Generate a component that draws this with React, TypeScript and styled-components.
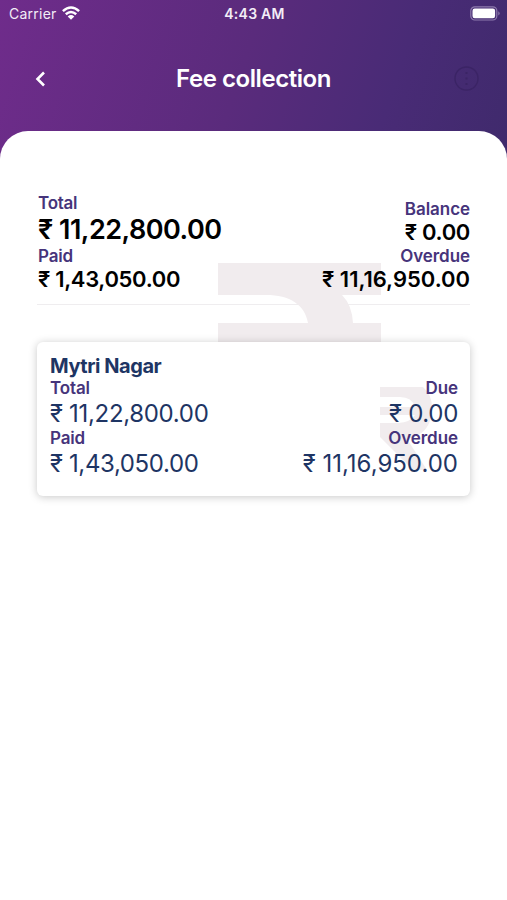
import React from "react";
import styled, { createGlobalStyle } from "styled-components";

const GlobalStyle = createGlobalStyle`
  * { box-sizing: border-box; }
  html, body { margin: 0; background: #fff; }
  body { font-family: Inter, "Liberation Sans", sans-serif; }
`;

const Screen = styled.main`
  width: 507px;
  height: 900px;
  overflow: hidden;
  display: flex;
  flex-direction: column;
  background: linear-gradient(108deg, #6f2c8b 0%, #5a2b7c 47%, #492b76 75%, #3f2a6c 100%) top / 100% 170px no-repeat;
`;

const StatusBar = styled.div`
  height: 27px;
  padding: 0 7px 0 9px;
  display: grid;
  grid-template-columns: 1fr auto 1fr;
  align-items: center;
  color: #f3edf7;
`;

const Carrier = styled.div`
  display: flex;
  align-items: center;
  gap: 5px;
  svg { display: block; margin-top: -2px; }
`;

const Battery = styled.div`
  justify-self: end;
  svg { display: block; }
`;

const Header = styled.header`
  height: 104px;
  padding: 0 27px 0 33px;
  display: grid;
  grid-template-columns: 27px 1fr 27px;
  align-items: center;
  color: #fff;
  svg { display: block; }
  h1 { justify-self: center; padding-right: 6px; }
`;

const IconButton = styled.button<{ $end?: boolean }>`
  border: 0;
  padding: 0 0 1px;
  background: none;
  color: inherit;
  justify-self: ${(p) => (p.$end ? "end" : "start")};
`;

const Sheet = styled.section`
  flex: 1;
  padding: 61px 37px 0;
  background: #fff;
  border-radius: 28px 28px 0 0;
`;

const Text = styled.span<{ $size: number; $line: number; $weight?: number; $color?: string; $track?: number }>`
  display: block;
  margin: 0;
  white-space: nowrap;
  font-size: ${(p) => p.$size}px;
  line-height: ${(p) => p.$line}px;
  font-weight: ${(p) => p.$weight ?? 400};
  color: ${(p) => p.$color ?? "inherit"};
  letter-spacing: ${(p) => p.$track ?? 0}px;
`;

const Summary = styled.div`
  position: relative;
  height: 113px;
  padding: 0 0 12px 1px;
  display: flex;
  justify-content: space-between;
  align-items: flex-end;
  border-bottom: 1px solid #efedef;
`;

const Column = styled.div<{ $end?: boolean }>`
  position: relative;
  display: flex;
  flex-direction: column;
  align-items: ${(p) => (p.$end ? "flex-end" : "flex-start")};
`;

const Watermark = styled.svg<{ $x: number; $y: number }>`
  position: absolute;
  left: ${(p) => p.$x}px;
  top: ${(p) => p.$y}px;
  fill: #f1ecee;
`;

const Card = styled.article`
  position: relative;
  margin-top: 37px;
  height: 154px;
  padding: 12px 12px 0 13px;
  background: #fff;
  border-radius: 6px;
  box-shadow: 0 1px 9px rgba(0, 0, 0, 0.22);
`;

const CardRow = styled.div`
  display: flex;
  justify-content: space-between;
`;

const Label = "#46347b";
const Navy = "#1e3564";

export default function App() {
  return (
    <>
      <GlobalStyle />
      <Screen>
        <StatusBar>
          <Carrier>
            <Text $size={14} $line={20} $track={0.25}>Carrier</Text>
            <svg width="18" height="14" viewBox="0 0 18 14" fill="none" stroke="#fff" strokeWidth="2.5">
              <path d="M.9 5.2Q9-2.2 17.1 5.2M3.8 8.3Q9 3.8 14.2 8.3" />
              <path d="M9 13.8L5.7 10.5Q9 7.6 12.3 10.5Z" fill="#fff" stroke="none" />
            </svg>
          </Carrier>
          <Text $size={14} $line={20} $weight={600} $track={0.25}>4:43 AM</Text>
          <Battery>
            <svg width="30" height="15" viewBox="0 0 30 15">
              <rect x=".8" y=".8" width="26" height="13.2" rx="4" fill="none" stroke="#8e7bad" strokeWidth="1.2" />
              <rect x="2.5" y="2.6" width="22.6" height="9.6" rx="2.2" fill="#fff" />
              <path d="M28.3 5.2Q31 7.4 28.3 9.6Z" fill="#8e7bad" />
            </svg>
          </Battery>
        </StatusBar>
        <Header>
          <IconButton aria-label="Back">
            <svg width="15" height="18" viewBox="0 0 15 18" fill="none" stroke="#fff" strokeWidth="2.6">
              <path d="M11 2.5L4.5 9L11 15.5" />
            </svg>
          </IconButton>
          <Text as="h1" $size={24} $line={30} $weight={600} $track={-0.45}>Fee collection</Text>
          <IconButton $end aria-label="More">
            <svg width="27" height="27" viewBox="0 0 27 27" fill="none" stroke="#3b2465" strokeWidth="1.4">
              <circle cx="13.5" cy="13.5" r="11.5" />
              <path d="M13.5 7v2M13.5 12.5v2M13.5 18v2" strokeWidth="2" />
            </svg>
          </IconButton>
        </Header>
        <Sheet>
          <Summary>
            <Watermark $x={181} $y={71} width="163" height="80" viewBox="0 0 163 80">
              <path d="M0 0H163V32H124Q134 42 135 60H163V80H0V60H90C87 42 72 32 48 32H0Z" />
            </Watermark>
            <Column>
              <Text $size={17} $line={21} $weight={600} $color={Label} $track={-0.25}>Total</Text>
              <Text $size={27} $line={32} $weight={600} $track={-0.5}>₹ 11,22,800.00</Text>
              <Text $size={17} $line={21} $weight={600} $color={Label} $track={-0.15}>Paid</Text>
              <Text $size={22} $line={25} $weight={600} $track={-0.34}>₹ 1,43,050.00</Text>
            </Column>
            <Column $end>
              <Text $size={17} $line={21} $weight={600} $color={Label} $track={-0.05}>Balance</Text>
              <Text $size={22} $line={25} $weight={600} $track={-0.34}>₹ 0.00</Text>
              <Text $size={17} $line={22} $weight={600} $color={Label} $track={-0.05}>Overdue</Text>
              <Text $size={22} $line={25} $weight={600} $track={-0.02}>₹ 11,16,950.00</Text>
            </Column>
          </Summary>
          <Card>
            <Watermark $x={343} $y={45} width="56" height="86" viewBox="0 0 56 86">
              <path fillRule="evenodd" d="M0 0H43Q52 8 52 20C52 39 43 49 27 52L47 83H33L0 50V36H18Q31 35 35 28H0V20H35Q32 10 20 10H0Z" />
            </Watermark>
            <Text as="h2" $size={20} $line={24} $weight={700} $color={Navy} $track={-0.45}>Mytri Nagar</Text>
            <CardRow>
              <Column>
                <Text $size={17} $line={20} $weight={600} $color={Label} $track={-0.15}>Total</Text>
                <Text $size={24} $line={31} $color={Navy} $track={-0.32}>₹ 11,22,800.00</Text>
                <Text $size={17} $line={19} $weight={600} $color={Label} $track={-0.15}>Paid</Text>
                <Text $size={24} $line={32} $color={Navy} $track={-0.38}>₹ 1,43,050.00</Text>
              </Column>
              <Column $end>
                <Text $size={17} $line={20} $weight={600} $color={Label} $track={-0.05}>Due</Text>
                <Text $size={24} $line={31} $color={Navy} $track={-0.32}>₹ 0.00</Text>
                <Text $size={17} $line={19} $weight={600} $color={Label} $track={-0.05}>Overdue</Text>
                <Text $size={24} $line={32} $color={Navy}>₹ 11,16,950.00</Text>
              </Column>
            </CardRow>
          </Card>
        </Sheet>
      </Screen>
    </>
  );
}
